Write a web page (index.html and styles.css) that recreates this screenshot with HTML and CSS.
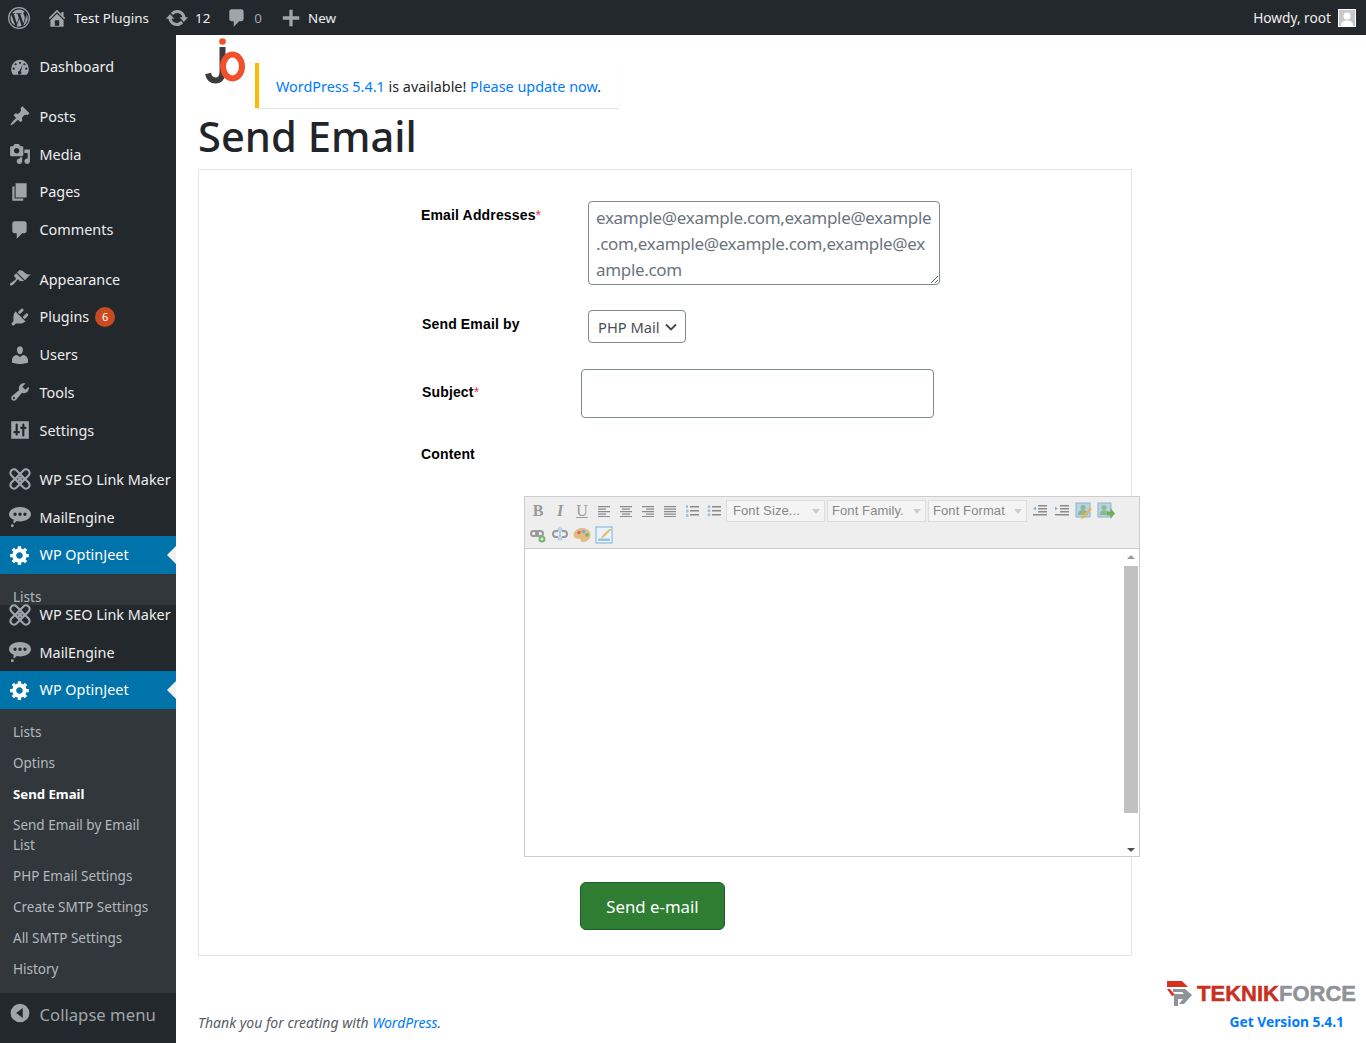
FILE: index.html
```html
<!DOCTYPE html>
<html lang="en">
<head>
  <meta charset="UTF-8">
  <title>Send Email</title>
  <link rel="stylesheet" href="styles.css">
</head>
<body>
  <svg class="sprites" width="0" height="0">
    <symbol id="i-wp" viewBox="0 0 22 22"><path fill-rule="evenodd" d="M11 0a11 11 0 1 0 0 22 11 11 0 0 0 0-22zm0 1.200a9.800 9.800 0 1 1 0 19.600 9.800 9.800 0 0 1 0-19.600z"/><path d="M2.500 11c0 3.300 1.900 6.200 4.700 7.600L3.200 7.500A8.500 8.500 0 0 0 2.500 11zm14.300-.4c0-1-.4-1.800-.7-2.300-.4-.7-.8-1.300-.8-2 0-.8.600-1.500 1.400-1.500h.1A8.500 8.500 0 0 0 4 6.300h.5c.9 0 2.300-.1 2.300-.1.500 0 .5.700 0 .8 0 0-.5.100-1 .1l3.100 9.300 1.900-5.600-1.300-3.700c-.5 0-.9-.1-.9-.1-.5 0-.4-.8 0-.8 0 0 1.400.1 2.300.1.900 0 2.300-.1 2.300-.1.500 0 .5.700 0 .8 0 0-.5.100-1 .1l3.100 9.200.9-2.900c.4-1.200.6-2 .6-2.800zM11.200 11.800l-2.600 7.400a8.500 8.500 0 0 0 5.200-.1l-.1-.1zm7.300-4.800c0 .3.100.6.100 1 0 .9-.2 1.900-.7 3.100l-2.600 7.600A8.500 8.500 0 0 0 18.500 7z"/></symbol>
    <symbol id="i-home" viewBox="0 0 20 20"><path d="M16 8.500l1.530 1.530-1.060 1.060L10 4.620l-6.470 6.470-1.060-1.060L10 2.500l4 4v-2h2v4zm-6-2.460l6 5.990V18H4v-5.970zM12 17v-5H8v5h4z"/></symbol>
    <symbol id="i-update" viewBox="0 0 20 20"><path d="M10.200 3.280c3.530 0 6.430 2.610 6.920 6h2.080l-3.500 4-3.500-4h2.320c-.45-1.970-2.210-3.450-4.320-3.450-1.450 0-2.730.71-3.540 1.780L4.950 5.660C6.230 4.200 8.110 3.280 10.200 3.280zm-.4 13.440c-3.520 0-6.430-2.610-6.920-6H.8l3.500-4c1.170 1.330 2.330 2.670 3.500 4H5.480c.45 1.970 2.210 3.450 4.320 3.450 1.450 0 2.730-.71 3.540-1.780l1.710 1.950c-1.280 1.460-3.150 2.380-5.250 2.380z"/></symbol>
    <symbol id="i-comment" viewBox="0 0 20 20"><path d="M5 2h9c1.100 0 2 .9 2 2v7c0 1.100-.9 2-2 2h-2l-5 5v-5H5c-1.100 0-2-.9-2-2V4c0-1.100.9-2 2-2z"/></symbol>
    <symbol id="i-plus" viewBox="0 0 20 20"><path d="M17.500 8.500v3h-6v6h-3v-6h-6v-3h6v-6h3v6z"/></symbol>
    <symbol id="i-dashboard" viewBox="0 0 20 20"><path fill-rule="evenodd" d="M3.760 17h12.480A7.960 7.960 0 0 0 18 11.500a8 8 0 0 0-16 0c0 2.100.66 4 1.760 5.500zM10 5.200a1 1 0 1 1 0 2 1 1 0 0 1 0-2zM6 6.500a1 1 0 1 1 0 2 1 1 0 0 1 0-2zm8 0a1 1 0 1 1 0 2 1 1 0 0 1 0-2zM4.300 10.500a1 1 0 1 1 0 2 1 1 0 0 1 0-2zm11.400 0a1 1 0 1 1 0 2 1 1 0 0 1 0-2zM12.500 8l-1.700 6a1.600 1.600 0 1 1-1.500-.4z"/></symbol>
    <symbol id="i-pin" viewBox="0 0 20 20"><path d="M10.440 3.020l1.820-1.820 6.360 6.350-1.830 1.820c-1.050-.68-2.480-.57-3.410.36l-.75.75c-.92.93-1.040 2.350-.35 3.410l-1.830 1.820-2.410-2.410-2.800 2.790c-.42.42-3.380 2.710-3.800 2.290s1.860-3.390 2.280-3.810l2.790-2.790L4.100 9.360l1.830-1.820c1.050.69 2.480.57 3.400-.36l.75-.75c.93-.92 1.050-2.350.36-3.410z"/></symbol>
    <symbol id="i-media" viewBox="0 0 20 20"><path d="M13 11V4c0-.55-.45-1-1-1h-1.670L9 1H5L3.670 3H2c-.55 0-1 .45-1 1v7c0 .55.45 1 1 1h10c.55 0 1-.45 1-1zM7 4.500c1.380 0 2.500 1.120 2.500 2.500S8.380 9.500 7 9.500 4.500 8.380 4.500 7 5.620 4.500 7 4.500zM14 6h5v10.500c0 1.380-1.120 2.500-2.500 2.500S14 17.880 14 16.500s1.120-2.500 2.500-2.500c.17 0 .34.02.5.05V9h-3V6zm-4 8.050V13h2v3.500c0 1.380-1.120 2.500-2.500 2.500S7 17.880 7 16.500 8.120 14 9.500 14c.17 0 .34.02.5.05z"/></symbol>
    <symbol id="i-pages" viewBox="0 0 20 20"><path d="M6 15V2h10v13H6zm-1 1h8v2H3V5h2v11z"/></symbol>
    <symbol id="i-brush" viewBox="0 0 20 20"><path d="M14.480 11.060L7.410 3.990l1.500-1.500c.5-.56 2.300-.47 3.510.32 1.210.8 1.430 1.280 2.910 2.100 1.180.64 2.450 1.260 4.450.85zm-.71.71L6.700 4.700 4.930 6.470c-.39.39-.39 1.020 0 1.410l1.060 1.060c.39.39.39 1.030 0 1.420-.6.6-1.430 1.110-2.210 1.690-.35.26-.7.530-1.010.84C1.430 13.230.4 14.950 1.120 15.670c.71.72 2.440-.32 3.780-1.650.31-.31.58-.66.84-1.010.58-.78 1.090-1.610 1.690-2.210.39-.39 1.020-.39 1.410 0l1.060 1.060c.39.39 1.020.39 1.410 0z"/></symbol>
    <symbol id="i-plug" viewBox="0 0 20 20"><path d="M13.110 4.360L9.870 7.600 8 5.730l3.240-3.240c.35-.34 1.050-.2 1.560.32.52.51.66 1.210.31 1.550zm-8 1.770l.91-1.120 9.010 9.010-1.190.84c-.71.71-2.630 1.160-3.820 1.160H6.140L4.900 17.260c-.59.59-1.540.59-2.120 0-.59-.58-.59-1.530 0-2.120l1.240-1.240v-3.880c0-1.130.4-3.190 1.090-3.890zm7.260 3.970l3.240-3.240c.34-.35 1.040-.21 1.550.31.52.51.66 1.210.31 1.550l-3.240 3.250z"/></symbol>
    <symbol id="i-user" viewBox="0 0 20 20"><path d="M10 9.250c-2.270 0-2.730-3.440-2.730-3.440C7 4.020 7.820 2 9.970 2c2.160 0 2.980 2.020 2.710 3.810 0 0-.41 3.440-2.680 3.440zm0 2.570L12.720 10c2.390 0 4.520 2.330 4.520 4.530v2.490s-3.650 1.130-7.240 1.130c-3.650 0-7.240-1.130-7.240-1.130v-2.490c0-2.250 1.940-4.480 4.470-4.480z"/></symbol>
    <symbol id="i-wrench" viewBox="0 0 20 20"><path d="M16.680 9.770c-1.340 1.340-3.300 1.670-4.950.99l-5.410 6.520c-.99.99-2.590.99-3.580 0s-.99-2.590 0-3.570l6.520-5.420c-.68-1.650-.35-3.610.99-4.950 1.280-1.280 3.120-1.620 4.720-1.060l-2.890 2.890 2.820 2.820 2.860-2.870c.53 1.580.18 3.390-1.080 4.650zM3.810 16.210c.4.39 1.040.39 1.430 0 .4-.4.4-1.040 0-1.430-.39-.4-1.030-.4-1.430 0-.39.39-.39 1.030 0 1.430z"/></symbol>
    <symbol id="i-settings" viewBox="0 0 20 20"><path fill-rule="evenodd" d="M18 18V2H2v16zM8 11h1c.55 0 1 .45 1 1s-.45 1-1 1H8v1c0 .55-.45 1-1 1s-1-.45-1-1v-1H5c-.55 0-1-.45-1-1s.45-1 1-1h1V5c0-.55.45-1 1-1s1 .45 1 1v6zm7-2h-1v6c0 .55-.45 1-1 1s-1-.45-1-1V9h-1c-.55 0-1-.45-1-1s.45-1 1-1h1V5c0-.55.45-1 1-1s1 .45 1 1v2h1c.55 0 1 .45 1 1s-.45 1-1 1z"/></symbol>
    <symbol id="i-link" viewBox="0 0 20 20"><g fill="none" stroke="currentColor"><rect x="-1" y="6.700" width="22" height="6.600" rx="3.300" stroke-width="1.900" transform="rotate(45 10 10)"/><rect x="-1" y="6.700" width="22" height="6.600" rx="3.300" stroke-width="1.900" transform="rotate(-45 10 10)"/><path stroke-width="1" d="M10 6v8M6 10h8M7.500 7.500l5 5M12.500 7.500l-5 5"/></g></symbol>
    <symbol id="i-chat" viewBox="0 0 20 20"><path fill-rule="evenodd" d="M10 1c5.500 0 10 2.800 10 6.500S15.500 14 10 14c-1 0-2-.1-2.900-.3L5 15.500c-.5.4-1.200 0-1-.7l.3-2.200C1.700 11.500 0 9.600 0 7.500 0 3.800 4.500 1 10 1zM5.500 6a1.500 1.500 0 1 0 0 3 1.500 1.500 0 0 0 0-3zm4.500 0a1.500 1.500 0 1 0 0 3 1.500 1.500 0 0 0 0-3zm4.500 0a1.500 1.500 0 1 0 0 3 1.500 1.500 0 0 0 0-3z"/><circle cx="3" cy="18" r="1.300"/></symbol>
    <symbol id="i-gear" viewBox="0 0 20 20"><path d="M18 12h-2.180c-.17.7-.44 1.350-.81 1.930l1.540 1.540-2.100 2.100-1.540-1.540c-.58.36-1.230.63-1.910.79V19H8v-2.180c-.68-.16-1.330-.43-1.910-.79l-1.540 1.540-2.120-2.120 1.540-1.540c-.36-.58-.63-1.230-.79-1.910H1V9.030h2.170c.16-.7.44-1.350.8-1.940L2.430 5.550l2.100-2.100 1.540 1.540c.58-.37 1.240-.64 1.930-.81V2h3v2.180c.68.16 1.330.43 1.910.79l1.540-1.540 2.120 2.120-1.540 1.540c.36.59.64 1.240.8 1.940H18V12zm-8.500 1.500c1.660 0 3-1.340 3-3s-1.340-3-3-3-3 1.340-3 3 1.340 3 3 3z"/></symbol>
    <symbol id="i-collapse" viewBox="0 0 20 20"><path fill-rule="evenodd" d="M10 1.500a8.500 8.500 0 1 1 0 17 8.500 8.500 0 0 1 0-17zM12.500 5.500L6.500 10l6 4.500z"/></symbol>
    <symbol id="t-left" viewBox="0 0 16 16"><path d="M2 3h12v1.200H2zM2 5.500h8v1.200H2zM2 8h12v1.200H2zM2 10.500h8v1.200H2zM2 13h12v1H2z"/></symbol>
    <symbol id="t-center" viewBox="0 0 16 16"><path d="M2 3h12v1.200H2zM4 5.500h8v1.200H4zM2 8h12v1.200H2zM4 10.500h8v1.200H4zM2 13h12v1H2z"/></symbol>
    <symbol id="t-right" viewBox="0 0 16 16"><path d="M2 3h12v1.200H2zM6 5.500h8v1.200H6zM2 8h12v1.200H2zM6 10.500h8v1.200H6zM2 13h12v1H2z"/></symbol>
    <symbol id="t-full" viewBox="0 0 16 16"><path d="M2 3h12v1.200H2zM2 5.500h12v1.200H2zM2 8h12v1.200H2zM2 10.500h12v1.200H2zM2 13h12v1H2z"/></symbol>
  </svg>

  <header class="topbar">
    <div class="topbar-left">
      <svg class="tb-logo"><use href="#i-wp"/></svg>
      <svg class="tb-icon tb-home"><use href="#i-home"/></svg><span class="tb-site">Test Plugins</span>
      <svg class="tb-icon tb-update"><use href="#i-update"/></svg><span class="tb-count">12</span>
      <svg class="tb-icon tb-comment"><use href="#i-comment"/></svg><span class="tb-count tb-zero">0</span>
      <svg class="tb-icon tb-plus"><use href="#i-plus"/></svg><span class="tb-new">New</span>
    </div>
    <div class="topbar-right">
      <span>Howdy, root</span>
      <svg class="avatar" viewBox="0 0 18 18"><rect width="18" height="18" fill="#fff"/><rect x="1" y="1" width="16" height="16" fill="#c8c8c8"/><circle cx="9" cy="7" r="3.500" fill="#fff"/><path d="M3 17c0-4 2.500-5.500 6-5.500s6 1.500 6 5.500z" fill="#fff"/></svg>
    </div>
  </header>

  <div class="layout">
    <nav class="sidebar">
      <ul class="menu">
        <li class="item"><svg class="icon"><use href="#i-dashboard"/></svg>Dashboard</li>
        <li class="sep"></li>
        <li class="item"><svg class="icon"><use href="#i-pin"/></svg>Posts</li>
        <li class="item"><svg class="icon"><use href="#i-media"/></svg>Media</li>
        <li class="item"><svg class="icon"><use href="#i-pages"/></svg>Pages</li>
        <li class="item"><svg class="icon"><use href="#i-comment"/></svg>Comments</li>
        <li class="sep"></li>
        <li class="item"><svg class="icon"><use href="#i-brush"/></svg>Appearance</li>
        <li class="item"><svg class="icon"><use href="#i-plug"/></svg>Plugins<span class="badge">6</span></li>
        <li class="item"><svg class="icon"><use href="#i-user"/></svg>Users</li>
        <li class="item"><svg class="icon"><use href="#i-wrench"/></svg>Tools</li>
        <li class="item"><svg class="icon"><use href="#i-settings"/></svg>Settings</li>
        <li class="sep"></li>
        <li class="item"><svg class="icon"><use href="#i-link"/></svg>WP SEO Link Maker</li>
        <li class="item"><svg class="icon"><use href="#i-chat"/></svg>MailEngine</li>
        <li class="item active"><svg class="icon"><use href="#i-gear"/></svg>WP OptinJeet</li>
        <li class="sub sub-cut"><div class="sub-item">Lists</div></li>
        <li class="item item-tucked"><svg class="icon"><use href="#i-link"/></svg>WP SEO Link Maker</li>
        <li class="item"><svg class="icon"><use href="#i-chat"/></svg>MailEngine</li>
        <li class="item active"><svg class="icon"><use href="#i-gear"/></svg>WP OptinJeet</li>
        <li class="sub">
          <div class="sub-item">Lists</div>
          <div class="sub-item">Optins</div>
          <div class="sub-item current">Send Email</div>
          <div class="sub-item">Send Email by Email<br>List</div>
          <div class="sub-item">PHP Email Settings</div>
          <div class="sub-item">Create SMTP Settings</div>
          <div class="sub-item">All SMTP Settings</div>
          <div class="sub-item">History</div>
        </li>
        <li class="collapse"><svg class="icon"><use href="#i-collapse"/></svg>Collapse menu</li>
      </ul>
    </nav>

    <main class="content">
      <div class="top-row">
        <svg class="brand" viewBox="0 0 42 48">
          <path d="M17.500 9v25c0 6-3 8.500-7 8.500s-6.500-2.500-7.500-7" fill="none" stroke="#3f3a3c" stroke-width="6"/>
          <circle cx="17.500" cy="3.500" r="3.300" fill="#f1502c"/>
          <ellipse cx="27.500" cy="28.500" rx="9.500" ry="12" fill="none" stroke="#f1502c" stroke-width="6"/>
        </svg>
        <div class="notice"><a href="#">WordPress 5.4.1</a> is available! <a href="#">Please update now</a>.</div>
      </div>
      <h1>Send Email</h1>

      <form class="card">
        <div class="row row-emails">
          <label class="label lbl-emails">Email Addresses<em>*</em></label>
          <textarea class="field emails" placeholder="example@example.com,example@example.com,example@example.com,example@example.com"></textarea>
        </div>
        <div class="row row-by">
          <label class="label lbl-by">Send Email by</label>
          <div class="select-wrap">
            <select class="field by"><option>PHP Mail</option></select>
            <svg class="chevron" viewBox="0 0 12 8"><path d="M1 1.500l5 5 5-5" fill="none" stroke="#444" stroke-width="1.800"/></svg>
          </div>
        </div>
        <div class="row row-subject">
          <label class="label lbl-subject">Subject<em>*</em></label>
          <input class="field subject" type="text">
        </div>
        <div class="label lbl-content">Content</div>

        <div class="editor">
          <div class="toolbar">
            <div class="tool-row">
              <span class="tool tool-b">B</span>
              <span class="tool tool-i">I</span>
              <span class="tool tool-u">U</span>
              <svg class="tool-svg"><use href="#t-left"/></svg>
              <svg class="tool-svg"><use href="#t-center"/></svg>
              <svg class="tool-svg"><use href="#t-right"/></svg>
              <svg class="tool-svg"><use href="#t-full"/></svg>
              <svg class="tool-svg" viewBox="0 0 16 16"><path d="M6 3h9v1.500H6zM6 7h9v1.500H6zM6 11h9v1.500H6z" fill="#8a8a8a"/><path d="M2 2h2v3H2zM2 6.500h2.500v3H2zM2 11h2.500v3H2z" fill="#9cc3e6"/></svg>
              <svg class="tool-svg" viewBox="0 0 16 16"><path d="M6 3h9v1.500H6zM6 7h9v1.500H6zM6 11h9v1.500H6z" fill="#8a8a8a"/><circle cx="3" cy="3.700" r="1.500" fill="#9cc3e6"/><circle cx="3" cy="7.700" r="1.500" fill="#9cc3e6"/><circle cx="3" cy="11.700" r="1.500" fill="#9cc3e6"/></svg>
              <span class="combo combo-first">Font Size...<i></i></span>
              <span class="combo">Font Family.<i></i></span>
              <span class="combo">Font Format<i></i></span>
              <svg class="tool-svg" viewBox="0 0 16 16"><path d="M6 2h9v1.500H6zM6 5h9v1.500H6zM6 8h9v1.500H6zM1 11h14v1.500H1z" fill="#8a8a8a"/><path d="M1 5.500l3-2v4z" fill="#7db4e6"/></svg>
              <svg class="tool-svg" viewBox="0 0 16 16"><path d="M6 2h9v1.500H6zM6 5h9v1.500H6zM6 8h9v1.500H6zM1 11h14v1.500H1z" fill="#8a8a8a"/><path d="M4 5.500l-3-2v4z" fill="#7db4e6"/></svg>
              <svg class="tool-img" viewBox="0 0 18 18"><rect x="1" y="1" width="14" height="14" fill="#b9d3e6" stroke="#8fb3cf"/><path d="M3 13c0-3.500 2-5 5-5s5 1.500 5 5z" fill="#8fb98a"/><circle cx="8" cy="5.500" r="2.500" fill="#8fb98a"/><path d="M17 7l-8 9-3 1.500 1-3 8-9z" fill="#dfb860"/></svg>
              <svg class="tool-img" viewBox="0 0 18 18"><rect x="1" y="1" width="13" height="14" fill="#b9d3e6" stroke="#8fb3cf"/><circle cx="7" cy="5.500" r="2.500" fill="#8fb98a"/><path d="M3 13c0-3.500 1.500-5 4-5s4 1.500 4 5z" fill="#8fb98a"/><path d="M10 9.500h3.500V6l4.500 5.500-4.500 5.500v-3.500H10z" fill="#6faf5c"/></svg>
            </div>
            <div class="tool-row">
              <svg class="tool-svg" viewBox="0 0 16 16"><g fill="none" stroke="#9a9a9a" stroke-width="2"><rect x="1" y="4" width="7" height="5" rx="2.500"/><rect x="6" y="4" width="7" height="5" rx="2.500"/></g><circle cx="12" cy="12" r="3.500" fill="#74b86d"/><path d="M10.500 12h3M12 10.500v3" stroke="#fff"/></svg>
              <svg class="tool-svg" viewBox="0 0 16 16"><g fill="none" stroke="#9a9a9a" stroke-width="2"><path d="M6 4H4a3 3 0 0 0 0 6h2M10 4h2a3 3 0 0 1 0 6h-2"/></g><path d="M6 1l4 12M10 1L6 13M8 0v3M8 11v3" stroke="#9cc3e6" fill="none"/></svg>
              <svg class="tool-img" viewBox="0 0 18 18"><path d="M9 2c5 0 8.500 3 8.500 7s-3.500 7-7.500 7c-2.500 0-1.500-2.500-3.500-3S.5 12.500.5 9 4.500 2 9 2z" fill="#e4bb80"/><circle cx="6" cy="6.500" r="1.800" fill="#d66"/><circle cx="10.500" cy="5.500" r="1.800" fill="#7aa9dd"/><circle cx="14" cy="9" r="1.800" fill="#6b6"/></svg>
              <svg class="tool-img" viewBox="0 0 18 18"><rect x="1" y="1" width="16" height="16" fill="#eaf3fb" stroke="#7fb0da"/><path d="M3 15h12v-2.500H3z" fill="#9cc3e6"/><path d="M17 3l-8 8-3 2 1-3 7-7z" fill="#e2bd68"/></svg>
            </div>
          </div>
          <div class="edit-area">
            <div class="scrollbar">
              <span class="arrow-up"></span>
              <span class="thumb"></span>
              <span class="arrow-down"></span>
            </div>
          </div>
        </div>

        <button class="send" type="button">Send e-mail</button>
      </form>

      <footer class="foot">
        <p class="thanks">Thank you for creating with <a href="#">WordPress</a>.</p>
        <div class="foot-right">
          <div class="tf-logo">
            <svg class="tf-mark" viewBox="0 0 25 26"><path d="M0 0h15l6 6H0z" fill="#d8321f"/><path d="M0 8h3l5 6-3 1z" fill="#d8321f"/><path d="M6 8h12l7 6-8 9h-5l4-5H11v7H7V13h10l-2-2H6z" fill="#8f9398"/></svg>
            <span class="tf-a">TEKNIK</span><span class="tf-b">FORCE</span>
          </div>
          <a class="get-version" href="#">Get Version 5.4.1</a>
        </div>
      </footer>
    </main>
  </div>
</body>
</html>
```

FILE: styles.css
```css
/* page */
* {
  box-sizing: border-box;
}

html,
body {
  margin: 0;
  padding: 0;
  height: 1043px;
  overflow: hidden;
}

body {
  font-family: "Noto Sans", "Open Sans", sans-serif;
  font-size: 14px;
  color: #212529;
  background-color: #fff;
}

a {
  color: #007bff;
  text-decoration: none;
}

.sprites {
  position: absolute;
}

/* admin bar */
.topbar {
  height: 35px;
  background-color: #23282d;
  color: #eee;
  font-size: 13.4px;
  display: flex;
  justify-content: space-between;
  align-items: center;
}

.topbar-left,
.topbar-right {
  display: flex;
  align-items: center;
}

.tb-logo {
  width: 22px;
  height: 22px;
  margin-left: 8px;
  fill: #a0a5aa;
}

.tb-icon {
  width: 22px;
  height: 22px;
  fill: #a0a5aa;
}

.tb-home {
  margin-left: 16px;
  margin-right: 6px;
}

.tb-update {
  margin-left: 16px;
  margin-right: 6px;
  width: 24px;
  height: 24px;
}

.tb-comment {
  margin-left: 16px;
  margin-right: 6px;
}

.tb-zero {
  color: #a0a5aa;
}

.tb-plus {
  margin-left: 18px;
  margin-right: 6px;
}

.topbar-right {
  padding-right: 10px;
  font-size: 13.7px;
}

.avatar {
  width: 18px;
  height: 18px;
  margin-left: 7px;
}

/* side menu */
.layout {
  display: flex;
  height: 1008px;
}

.sidebar {
  width: 176px;
  flex: none;
  background-color: #23282d;
  color: #eee;
  padding-top: 13px;
}

.menu {
  list-style: none;
  margin: 0;
  padding: 0;
}

.item {
  position: relative;
  height: 37.75px;
  display: flex;
  align-items: center;
  padding-left: 8.5px;
  font-size: 14.4px;
  white-space: nowrap;
}

.icon {
  width: 22px;
  height: 22px;
  margin-right: 9px;
  flex: none;
  fill: #a0a5aa;
  color: #a0a5aa;
}

.sep {
  height: 11.7px;
}

.badge {
  width: 20px;
  height: 20px;
  margin-left: 6px;
  border-radius: 50%;
  background-color: #ca4a1f;
  color: #fff;
  font-size: 11px;
  line-height: 20px;
  text-align: center;
}

.active {
  background-color: #0073aa;
  color: #fff;
}

.active .icon {
  fill: #fff;
  color: #fff;
}

.active::after {
  content: "";
  position: absolute;
  right: 0;
  top: 50%;
  margin-top: -9px;
  border: 9px solid transparent;
  border-right-color: #f1f1f1;
  border-left-width: 0;
}

.item-tucked {
  height: 28.5px;
  padding-bottom: 9px;
}

.sub {
  background-color: #32373c;
  color: #b4b9be;
  font-size: 13.5px;
  padding: 7.5px 0 8.5px;
}

.sub-cut {
  height: 31px;
  overflow: hidden;
  padding-top: 7.5px;
}

.sub-item {
  padding: 5.5px 0 5.5px 13px;
  line-height: 20px;
}

.current {
  color: #fff;
  font-weight: 700;
  font-size: 13.2px;
}

.collapse {
  display: flex;
  align-items: center;
  height: 44px;
  padding-left: 8.5px;
  font-size: 16.7px;
  color: #a0a5aa;
}

.collapse .icon {
  margin-top: -4px;
}

/* main column */
.content {
  flex: 1;
  min-width: 0;
  padding-left: 22px;
  display: flex;
  flex-direction: column;
}

.top-row {
  display: flex;
  align-items: flex-start;
  height: 73px;
}

.brand {
  width: 42px;
  height: 48px;
  margin: 3px 0 0 7px;
}

.notice {
  width: 364px;
  height: 45px;
  margin: 28px 0 0 8px;
  padding: 13px 0 0 17px;
  border-left: 4px solid #ffb900;
  box-shadow: 0 1px 1px rgba(0, 0, 0, 0.1);
  font-size: 14.4px;
  line-height: 22px;
  white-space: nowrap;
}

h1 {
  margin: 0;
  height: 61px;
  font-size: 41.7px;
  font-weight: 500;
  line-height: 56px;
}

.card {
  width: 934px;
  height: 787px;
  border: 1px solid #e2e4e7;
  position: relative;
}

.row {
  display: flex;
  align-items: flex-start;
}

.label {
  font-family: "Liberation Sans", Arial, sans-serif;
  font-size: 14px;
  font-weight: 700;
  letter-spacing: 0.15px;
  color: #000;
}

.label em {
  color: #dc3545;
  font-style: normal;
  font-weight: 400;
}

.row-emails {
  margin-top: 31px;
}

.lbl-emails {
  width: 167px;
  margin-left: 222px;
  padding-top: 6px;
}

.row-by {
  margin-top: 25px;
}

.lbl-by {
  width: 166px;
  margin-left: 223px;
  padding-top: 6px;
}

.row-subject {
  margin-top: 26px;
}

.lbl-subject {
  width: 159px;
  margin-left: 223px;
  padding-top: 15px;
}

.lbl-content {
  margin: 28px 0 0 222px;
}

.field {
  border: 1px solid #7e8993;
  border-radius: 4px;
  background-color: #fff;
  font-family: "Noto Sans", "Open Sans", sans-serif;
  color: #495057;
  outline: none;
}

.emails {
  width: 352px;
  height: 84px;
  padding: 3px 7px 0;
  font-size: 17px;
  letter-spacing: -0.32px;
  line-height: 26px;
}

.emails::placeholder {
  color: #6c757d;
  opacity: 1;
}

.select-wrap {
  position: relative;
}

.by {
  display: block;
  width: 98px;
  height: 33px;
  padding: 0 0 0 9px;
  font-size: 14.7px;
  appearance: none;
}

.chevron {
  position: absolute;
  right: 9px;
  top: 13px;
  width: 12px;
  height: 8px;
  pointer-events: none;
}

.subject {
  display: block;
  width: 353px;
  height: 49px;
}

/* tinymce box */
.editor {
  width: 616px;
  height: 361px;
  margin: 34px 0 0 325px;
  border: 1px solid #ccc;
  display: flex;
  flex-direction: column;
}

.toolbar {
  height: 52px;
  padding: 2px 0 0 2px;
  background-color: #eee;
  border-bottom: 1px solid #ccc;
  flex: none;
}

.tool-row {
  display: flex;
  align-items: center;
  height: 24px;
}

.tool,
.tool-svg,
.tool-img {
  width: 22px;
  height: 22px;
  flex: none;
}

.tool {
  text-align: center;
  line-height: 22px;
  font-family: "Liberation Serif", serif;
  font-size: 16px;
  color: #999;
}

.tool-b {
  font-weight: 700;
}

.tool-i {
  font-style: italic;
  font-weight: 700;
}

.tool-u {
  text-decoration: underline;
}

.tool-svg {
  padding: 3px;
  fill: #8a8a8a;
}

.tool-img {
  padding: 2px;
}

.combo {
  position: relative;
  width: 99px;
  height: 22px;
  margin-right: 2px;
  padding-left: 4px;
  border: 1px solid #ddd;
  background-color: #f4f4f4;
  font-family: "Liberation Sans", Arial, sans-serif;
  font-size: 13px;
  line-height: 20px;
  letter-spacing: 0.1px;
  color: #888;
  white-space: nowrap;
}

.combo-first {
  margin-left: 1px;
  padding-left: 6px;
}

.combo i {
  position: absolute;
  right: 4px;
  top: 8px;
  border: 4px solid transparent;
  border-top: 5px solid #ccc;
  border-bottom-width: 0;
}

.edit-area {
  flex: 1;
  display: flex;
  justify-content: flex-end;
  background-color: #fff;
}

.scrollbar {
  width: 16px;
  display: flex;
  flex-direction: column;
  align-items: center;
  padding: 6px 0 4px;
}

.arrow-up {
  border: 4px solid transparent;
  border-bottom: 4px solid #999;
  border-top-width: 0;
}

.thumb {
  width: 14px;
  height: 247px;
  margin: 7px 0 auto;
  background-color: #c1c1c1;
}

.arrow-down {
  border: 4px solid transparent;
  border-top: 4px solid #505050;
  border-bottom-width: 0;
}

.send {
  display: block;
  width: 145px;
  height: 48px;
  margin: 25px 0 0 381px;
  border: 1px solid #1d5e24;
  border-radius: 6px;
  background-color: #2e7d32;
  color: #fff;
  font-family: "Noto Sans", "Open Sans", sans-serif;
  font-size: 16.8px;
}

/* footer */
.foot {
  display: flex;
  justify-content: space-between;
  flex: 1;
}

.thanks {
  margin: 57px 0 0;
  font-size: 14px;
  font-style: italic;
  color: #555d66;
}

.foot-right {
  display: flex;
  flex-direction: column;
  align-items: flex-end;
  padding: 25px 10px 0 0;
}

.tf-logo {
  display: flex;
  align-items: center;
  height: 26px;
  font-family: "Liberation Sans", Arial, sans-serif;
  font-size: 22px;
  font-weight: 700;
  -webkit-text-stroke: 0.5px;
  white-space: nowrap;
}

.tf-mark {
  width: 25px;
  height: 26px;
  margin-right: 5px;
}

.tf-a {
  color: #c8301f;
}

.tf-b {
  color: #8f9398;
}

.get-version {
  margin: 5px 12px 0 0;
  font-size: 13.8px;
  font-weight: 700;
}
```
